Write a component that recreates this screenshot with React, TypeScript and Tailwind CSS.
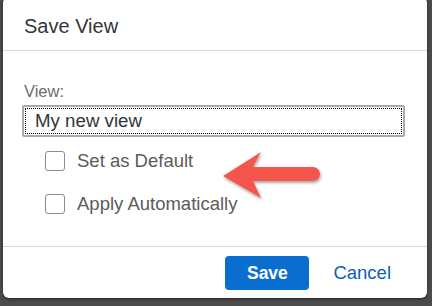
import { useState } from "react";

const Check = ({ label }: { label: string }) => {
  const [on, setOn] = useState(false);
  return (
    <label className="flex items-center gap-[12px] h-[22px] cursor-pointer">
      <span
        onClick={() => setOn(!on)}
        className="w-[20px] h-[20px] rounded-[3px] border border-[#8c8c8c] bg-white shrink-0"
      />
      <span className="text-[18.5px] text-[#5b5b5b]">{label}</span>
    </label>
  );
};

const App = () => {
  const [name, setName] = useState("My new view");

  return (
    <div
      className="w-[432px] h-[306px] bg-[#4b4b4b] overflow-hidden"
      style={{ fontFamily: '"Liberation Sans", Arial, sans-serif' }}
    >
      <div className="relative ml-[3px] -mt-[3px] w-[424px] h-[301px] bg-white rounded-[6px] flex flex-col shadow-[0_1px_3px_rgba(0,0,0,0.5)]">
        {/* header */}
        <div className="h-[54px] shrink-0 flex items-end pb-[9px] pl-[21px] border-b border-[#d9d9d9]">
          <span className="text-[20px] text-[#32363a]">Save View</span>
        </div>

        {/* body */}
        <div className="flex-1 pt-[30px] pl-[19px] pr-[20px]">
          <div className="text-[16.5px] text-[#6a6d70] leading-[20px] pl-[2px]">View:</div>
          <div className="mt-[4px] h-[32px] w-[383px] border-[2px] border-[#a7abaf] rounded-[2px] p-[1px]">
            <input
              value={name}
              onChange={(e) => setName(e.target.value)}
              className="w-full h-full outline-dotted outline-1 outline-black -outline-offset-1 pl-[10px] text-[18.7px] text-[#32363a] bg-white"
              style={{ fontFamily: '"Liberation Sans", Arial, sans-serif' }}
            />
          </div>
          <div className="mt-[13px] pl-[23px] flex flex-col gap-[21px]">
            <Check label="Set as Default" />
            <Check label="Apply Automatically" />
          </div>
        </div>

        {/* footer */}
        <div className="h-[52px] shrink-0 border-t border-[#d9d9d9] flex items-start justify-end pt-[9px] pr-[36px] gap-[24px]">
          <button className="w-[84px] h-[34px] rounded-[4px] bg-[#0a6ed1] text-white font-bold text-[17.5px]">
            Save
          </button>
          <button className="h-[34px] text-[18.5px] text-[#0a5fb4]">Cancel</button>
        </div>

        {/* annotation arrow */}
        <svg
          className="absolute left-[210px] top-[150px] pointer-events-none"
          width="120"
          height="60"
          viewBox="210 150 120 60"
        >
          <defs>
            <filter id="sh" x="-20%" y="-20%" width="140%" height="150%">
              <feDropShadow dx="1" dy="2" stdDeviation="1.5" floodColor="#000" floodOpacity="0.35" />
            </filter>
          </defs>
          <path
            d="M220 179 L258 155 L250 170 L310 170 A7 7 0 0 1 310 184 L250 184 L258 201 Z"
            fill="#f4574c"
            filter="url(#sh)"
          />
        </svg>
      </div>
    </div>
  );
};

export default App;
